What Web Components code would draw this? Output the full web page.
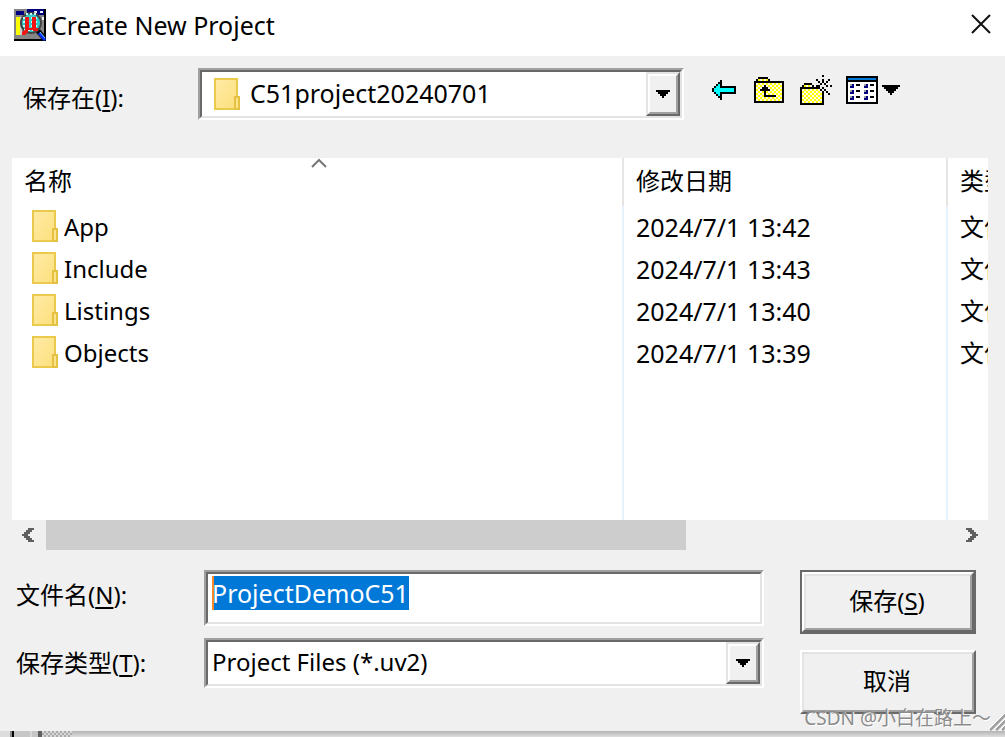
<!DOCTYPE html>
<html lang="zh-CN">
<head>
<meta charset="utf-8">
<title>Create New Project</title>
<style>
html, body { margin: 0; min-height: 100%; background: #f0f0f0; }
body { font: 24px/32px "Noto Sans", "Noto Sans CJK SC", sans-serif; color: #000; overflow: hidden; }
</style>
</head>
<body>
<save-dialog></save-dialog>
<script>
const define = (name, html, setup) => {
  const template = document.createElement('template');
  template.innerHTML = html;
  customElements.define(name, class extends HTMLElement {
    constructor() {
      super();
      this.attachShadow({ mode: 'open' }).append(template.content.cloneNode(true));
    }
    connectedCallback() { if (setup) setup(this, this.shadowRoot); }
  });
};

/* Bitmap glyphs: one character per cell, every cell two pixels wide. */
const COLORS = { '#': '#000', a: '#0ff', b: '#0078d7', n: '#000080', g: '#a0a0a0', w: '#fff', d: '#606060' };
const GLYPHS = {
  back: ['....#', '...##', '..#a#', '.#aa########', '#aaaaaaaaaa#', '#aaaaaaaaaa#', '.#aa########', '..#a#', '...##', '....#'],
  up: ['..#####', '.#yyyyy#', '###############', '#yyyyyyyyyyyyy#', '#yyyy#yyyyyyyy#', '#yyy###yyyyyyy#', '#yy#####yyyyyy#', '#yyyy#yyyyyyyy#', '#yyyy#yyyyyyyy#', '#yyyy######yyy#', '#yyyyyyyyyyyyy#', '#yyyyyyyyyyyyy#', '###############'],
  create: ['...........#....', '................', '........#..#..#.', '.........#.#.#..', '..####....#.#...', '.#yyyy#.##...#.#', '##########.#....', '#yyyyyyyyy#.#...', '#yyyyyyyyyy#.#..', '#yyyyyyyyyy#..#.', '#yyyyyyyyyy#', '#yyyyyyyyyy#', '#yyyyyyyyyy#', '#yyyyyyyyyy#', '############'],
  view: ['################', '#bbbbbbbbbbbbbb#', '################', '#wwwwwwwwwwwwww#', '#wgnw##wwgnw##w#', '#wnnwwwwwnnwwww#', '#wwwwwwwwwwwwww#', '#wgnw##wwgnw##w#', '#wnnwwwwwnnwwww#', '#wwwwwwwwwwwwww#', '#wgnw##wwgnw##w#', '#wnnwwwwwnnwwww#', '#wwwwwwwwwwwwww#', '################'],
  drop: ['#########', '.#######.', '..#####..', '...###...', '....#....'],
  down: ['#######', '.#####.', '..###..', '...#...'],
  left: ['...ddd', '..ddd.', '.ddd..', 'ddd...', '.ddd..', '..ddd.', '...ddd'],
  right: ['ddd...', '.ddd..', '..ddd.', '...ddd', '..ddd.', '.ddd..', 'ddd...']
};
define('pixel-icon', `<style>:host{display:block;flex:none;line-height:0}svg{display:block}</style><svg aria-hidden="true" shape-rendering="crispEdges"></svg>`, (host, root) => {
  const rows = GLYPHS[host.getAttribute('name')];
  const cols = Math.max(...rows.map(r => r.length));
  const svg = root.querySelector('svg');
  svg.setAttribute('width', cols * 2);
  svg.setAttribute('height', rows.length * 2);
  svg.setAttribute('viewBox', `0 0 ${cols} ${rows.length}`);
  let cells = '';
  rows.forEach((row, y) => {
    for (const run of row.matchAll(/([^.])\1*/g)) {
      const c = run[1];
      cells += `<rect x="${run.index}" y="${y}" width="${run[0].length}" height="1" fill="${c === 'y' ? '#ff0' : COLORS[c]}"/>`;
      if (c === 'y') for (let x = run.index; x < run.index + run[0].length; x++)
        if ((x + y) % 2 === 0) cells += `<rect x="${x}" y="${y}" width="1" height="1" fill="#fffbe8"/>`;
    }
  });
  svg.innerHTML = cells;
});

define('folder-icon', `
<style>:host{display:block;flex:none;width:26px;height:32px}svg{display:block}</style>
<svg width="26" height="32" viewBox="0 0 26 32" aria-hidden="true">
  <defs><linearGradient id="f" x2="1" y2="1"><stop stop-color="#ffeba6"/><stop offset="1" stop-color="#fcdf7c"/></linearGradient></defs>
  <path d="M1 1h22v30H1z" fill="url(#f)" stroke="#ebc94d" stroke-width="2"/>
  <path d="M21 19h4v12h-4z" fill="#fce38d" stroke="#e6c040" stroke-width="2"/>
</svg>`);

define('app-logo', `
<style>:host{display:block;flex:none;width:32px;height:32px}svg{display:block}</style>
<svg width="32" height="32" viewBox="0 0 32 32" aria-hidden="true">
  <path fill="#858585" d="M0 0h32v32H0z"/>
  <path fill="#000" d="M0 30h32v2H0zM30 0h2v32h-2z"/>
  <path fill="#000080" d="M2 2h8v4H2zM13 0h17v6H13z"/>
  <path fill="#eee" d="M20 2h3v2h-3zM26 2h3v2h-3zM28 8h2v3h-2z"/>
  <path fill="#ff0" d="M2 8h4v18H2z"/>
  <path fill="#ccc" d="M6 8h2v18H6z"/>
  <circle cx="17" cy="14" r="10" fill="#32cccc" stroke="#444" stroke-width="2"/>
  <path stroke="#bff" stroke-width="2" stroke-dasharray="2 2" d="M12 5h10M9 9h16M9 13h16M9 17h16M10 21h14"/>
  <path fill="#f51414" d="M11 8h4v11h3V8h4v11h2v3h-5v-1h-5v2l-3 3H8v-3l3-2z"/>
  <path stroke="#000" stroke-width="5" d="m24 22 7 8"/>
  <path stroke="#0a32ff" stroke-width="3" d="m25 24 6 7"/>
  <path stroke="#7cc8ff" d="m26 23 5 6"/>
</svg>`);

define('title-bar', `
<style>
:host{display:flex;align-items:center;height:56px;padding:0 12px 0 14px;background:#fff;box-sizing:border-box}
app-logo{margin-bottom:6px}
h1{flex:1;margin:0 0 6px 5px;font:inherit;font-size:25px}
button{width:24px;height:24px;margin-bottom:8px;padding:0;border:0;background:none;display:grid;place-items:center}
</style>
<app-logo></app-logo><h1><slot></slot></h1>
<button aria-label="关闭"><svg width="20" height="20" viewBox="0 0 20 20"><path d="m1 1 18 18M19 1 1 19" stroke="#111" stroke-width="2"/></svg></button>`);

define('sunken-box', `
<style>
:host{display:block;border:2px solid;border-color:#a0a0a0 #fff #fff #a0a0a0;box-sizing:border-box}
div{position:relative;display:flex;height:100%;border:2px solid;border-color:#696969 #e3e3e3 #e3e3e3 #696969;box-sizing:border-box;background:#fff}
</style>
<div><slot></slot></div>`);

define('combo-box', `
<style>
:host{display:block}
sunken-box{height:100%}
slot[name=icon]{display:block;position:absolute;left:12px;top:6px}
select{flex:1;min-width:0;appearance:none;border:0;border-radius:0;outline:0;margin:0;padding:0 38px 2px var(--indent,4px);background:none;color:inherit;font:inherit}
.arrow{position:absolute;right:0;top:0;bottom:0;width:34px;box-sizing:border-box;border:2px solid;border-color:#e3e3e3 #696969 #696969 #e3e3e3;background:#f0f0f0;pointer-events:none}
.face{height:100%;box-sizing:border-box;border:2px solid;border-color:#fff #a0a0a0 #a0a0a0 #fff;display:grid;place-items:center}
</style>
<sunken-box><slot name="icon"></slot><select></select><div class="arrow"><div class="face"><pixel-icon name="down"></pixel-icon></div></div></sunken-box>`,
(host, root) => {
  const select = root.querySelector('select');
  select.setAttribute('aria-label', host.getAttribute('label'));
  select.add(new Option(host.getAttribute('value')));
});

define('tool-bar', `
<style>
:host{display:flex;align-items:center;height:44px}
button{border:0;padding:0;background:none;display:flex;align-items:center;gap:4px}
.back{margin-right:18px}.up{margin-right:16px}.create{margin-right:14px}
</style>
<button class="back" aria-label="后退"><pixel-icon name="back"></pixel-icon></button>
<button class="up" aria-label="向上一级"><pixel-icon name="up"></pixel-icon></button>
<button class="create" aria-label="新建文件夹"><pixel-icon name="create"></pixel-icon></button>
<button aria-label="查看"><pixel-icon name="view"></pixel-icon><pixel-icon name="drop"></pixel-icon></button>`);

define('file-list', `
<style>
:host{display:block;background:#fff}
table{width:100%;table-layout:fixed;border-collapse:separate;border-spacing:0}
.date{width:324px}.type{width:40px}
th,td{box-sizing:border-box;padding:0 0 0 12px;text-align:left;font-weight:400;white-space:nowrap;overflow:hidden;height:42px}
th{position:relative;height:48px;padding-bottom:2px}
th:not(:last-child){border-right:2px solid #e5e5e5}
td:not(:last-child){border-right:2px solid #e8f2fd}
td:first-child{padding-left:20px}
td:nth-child(2){font-size:25px}
.name{display:flex;align-items:center;gap:6px}
folder-icon{margin-bottom:2px}
.rest td{height:146px}
.sort{position:absolute;left:50%;top:0;margin-left:-6px}
</style>
<table>
<colgroup><col><col class="date"><col class="type"></colgroup>
<thead><tr><th>名称<svg class="sort" width="16" height="10" viewBox="0 0 16 10" aria-hidden="true"><path d="m1 9 7-7 7 7" fill="none" stroke="#777" stroke-width="2"/></svg></th><th>修改日期</th><th>类型</th></tr></thead>
<tbody></tbody>
</table>`, (host, root) => {
  const files = [['App', '13:42'], ['Include', '13:43'], ['Listings', '13:40'], ['Objects', '13:39']];
  root.querySelector('tbody').innerHTML = files.map(([name, time]) =>
    `<tr><td><div class="name"><folder-icon></folder-icon><span>${name}</span></div></td><td>2024/7/1 ${time}</td><td>文件夹</td></tr>`).join('') +
    '<tr class="rest"><td></td><td></td><td></td></tr>';
});

define('scroll-bar', `
<style>
:host{display:flex;height:30px}
button{width:34px;padding:0 10px;border:0;background:none;display:flex;align-items:center;flex:none}
button:last-child{justify-content:flex-end}
.track{flex:1}.thumb{width:70.5%;height:100%;background:#cdcdcd}
</style>
<button aria-label="向左滚动"><pixel-icon name="left"></pixel-icon></button>
<div class="track"><div class="thumb"></div></div>
<button aria-label="向右滚动"><pixel-icon name="right"></pixel-icon></button>`);

define('push-button', `
<style>
:host{display:block;height:64px;box-sizing:border-box}
:host([default]){border:2px solid #696969}
button{width:100%;height:100%;box-sizing:border-box;padding:0;border:2px solid;border-color:#fff #696969 #696969 #fff;background:#f0f0f0;color:inherit;font:inherit}
span{display:flex;align-items:center;justify-content:center;height:100%;box-sizing:border-box;padding:0 2px 2px 0;border:2px solid;border-color:#e3e3e3 #a0a0a0 #a0a0a0 #e3e3e3}
</style>
<button><span><slot></slot></span></button>`);

define('name-field', `
<style>
:host{display:block}
sunken-box{height:100%}
input{flex:1;min-width:0;height:34px;margin:2px 0 0;padding:0 4px;border:0;outline:0;background:none;color:inherit;font:inherit;font-size:25px;line-height:34px}
input::selection{background:#0078d7;color:#fff}
.caret{position:absolute;left:4px;top:2px;width:2px;height:34px;background:#ff8728}
</style>
<sunken-box><input type="text" aria-label="文件名(N)" value="ProjectDemoC51"><span class="caret"></span></sunken-box>`, (host, root) => {
  const input = root.querySelector('input');
  input.focus();
  input.select();
});

define('window-edge', `
<style>
:host{display:block;height:6px;background:linear-gradient(#b4b4b4,#dedede)}
svg{display:block}
</style>
<svg width="72" height="6" viewBox="0 0 72 6" shape-rendering="crispEdges" aria-hidden="true">
  <defs><pattern id="c" width="4" height="4" patternUnits="userSpaceOnUse"><path fill="#d8d8d8" d="M0 0h4v4H0z"/><path fill="#aaa" d="M0 0h2v2H0zM2 2h2v2H2z"/></pattern></defs>
  <path fill="#ddd" d="M0 0h10v6H0z"/><path fill="#888" d="M10 0h2v6h-2z"/><path fill="#000" d="M12 0h2v6h-2z"/>
  <path fill="#c6c6c6" d="M14 0h24v6H14z"/><path fill="#d8d8d8" d="M30 0h2v6h-2z"/><path fill="#606060" d="M38 0h4v6h-4z"/>
  <path fill="url(#c)" d="M42 0h30v6H42z"/>
</svg>`);

define('save-dialog', `
<style>
:host{display:block;position:relative}
.look{display:flex;align-items:flex-start;padding:12px 105px 38px 23px}
.look label{width:175px;padding-top:14px}
.look combo-box{flex:1;height:52px;--indent:48px;font-size:25px}
tool-bar{margin-left:28px}
.files{margin:0 17px 20px 12px}
.form{display:flex;gap:36px;padding:0 29px 17px 16px}
.fields{flex:1;display:grid;grid-template-columns:188px 1fr;grid-template-rows:56px 50px;row-gap:12px}
.fields label{padding-top:9px}
.actions{width:176px;display:grid;gap:16px}
.mark{position:absolute;right:14px;bottom:6px;font-size:19px;line-height:26px;color:#8c8c8c;text-shadow:1px 1px #fff;white-space:nowrap}
.grip{position:absolute;right:0;bottom:6px}
u{text-decoration-thickness:2px;text-underline-offset:3px;text-decoration-skip-ink:none}
</style>
<title-bar>Create New Project</title-bar>
<div class="look"><label>保存在(<u>I</u>):</label>
<combo-box label="保存在(I)" value="C51project20240701"><folder-icon slot="icon"></folder-icon></combo-box>
<tool-bar></tool-bar></div>
<div class="files"><file-list></file-list><scroll-bar></scroll-bar></div>
<div class="form">
  <div class="fields">
    <label>文件名(<u>N</u>):</label><name-field></name-field>
    <label>保存类型(<u>T</u>):</label><combo-box label="保存类型(T)" value="Project Files (*.uv2)"></combo-box>
  </div>
  <div class="actions"><push-button default>保存(<u>S</u>)</push-button><push-button>取消</push-button></div>
</div>
<svg class="grip" width="16" height="18" viewBox="0 0 16 18" aria-hidden="true"><path d="M1 17 17 1M7 17 17 7M13 17l4-4" stroke="#a0a0a0" stroke-width="3"/><path d="M-1 17 17-1M5 17 17 5M11 17l6-6" stroke="#fff"/></svg>
<window-edge></window-edge>
<div class="mark">CSDN @小白在路上～</div>`, (host, root) => {
  /* Clicking a caption moves the focus to the control beside it. */
  root.querySelectorAll('label').forEach(label => label.addEventListener('click', () =>
    label.nextElementSibling.shadowRoot.querySelector('input,select').focus()));
});
</script>
</body>
</html>
